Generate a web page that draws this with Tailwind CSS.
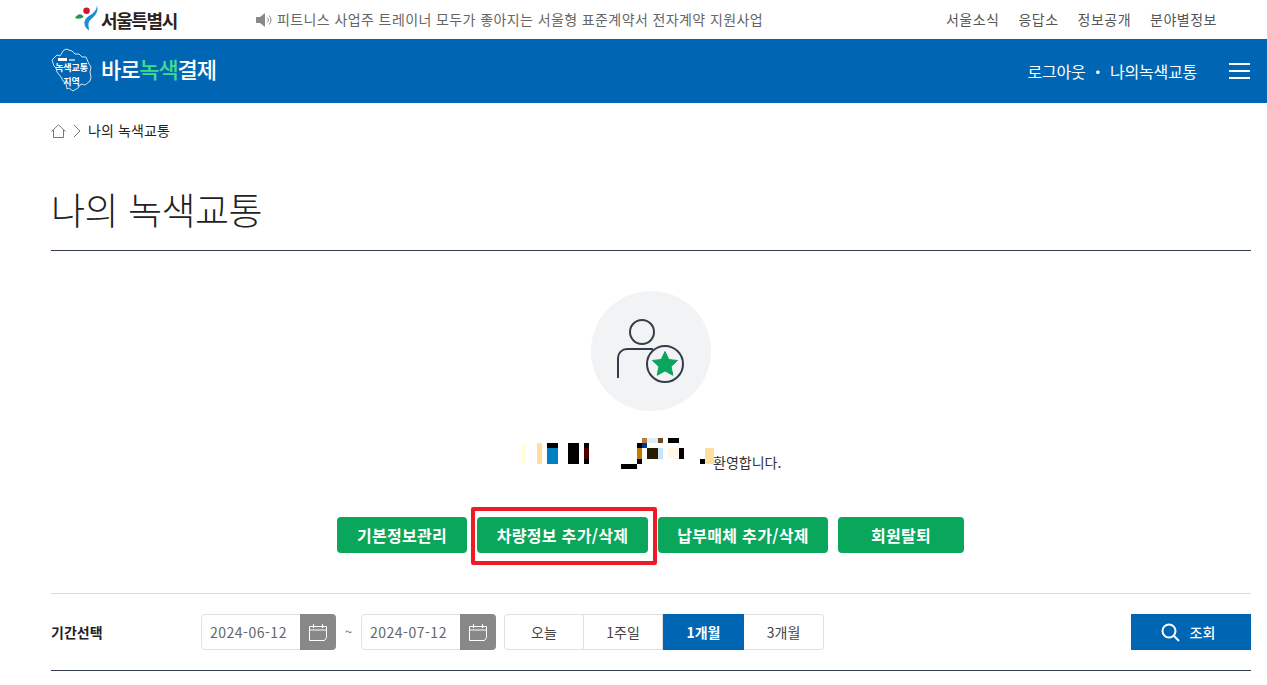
<!DOCTYPE html>
<html lang="ko">
<head>
  <meta charset="UTF-8" />
  <meta name="viewport" content="width=device-width, initial-scale=1" />
  <title>나의 녹색교통</title>
  <script src="https://cdn.jsdelivr.net/npm/@tailwindcss/browser@4"></script>
</head>
<body class="bg-white h-[685px] overflow-hidden font-['Noto_Sans_CJK_KR','Noto_Sans',sans-serif]">
  <!-- top bar -->
  <div class="h-[39px] flex items-center text-[#666] text-[14px]">
    <div class="w-[256px] pl-[75px] flex items-center shrink-0">
      <svg width="25" height="26" viewBox="0 0 26 26" class="mb-[3px]">
        <path d="M0 13 C3 8 7 8 9 12 C6 14 3 14 0 13Z" fill="#1f9a4a" />
        <circle cx="12" cy="5.5" r="3.4" fill="#d8152f" />
        <path d="M23 0 C25 8 19 12 16 15 C13 18 14 22 15 26 C9 23 8 16 13 12 C17 9 22 7 23 0Z" fill="#1b8fd0" />
      </svg>
      <span class="ml-[1px] text-[18px] font-bold text-[#2b2222] tracking-[-1.4px] leading-none">서울특별시</span>
    </div>
    <svg width="17" height="14" viewBox="0 0 17 14" class="shrink-0">
      <path d="M0 4h4l5-4v14l-5-4H0Z" fill="#888" />
      <path d="M11 4.5a3 3 0 0 1 0 5M13 2.5a6 6 0 0 1 0 9" fill="none" stroke="#888" />
    </svg>
    <span class="ml-[4px] tracking-[0.4px]">피트니스 사업주 트레이너 모두가 좋아지는 서울형 표준계약서 전자계약 지원사업</span>
    <nav class="ml-auto mr-[50px] flex gap-[19px] text-[#555] tracking-[0.5px]">
      <a>서울소식</a><a>응답소</a><a>정보공개</a><a>분야별정보</a>
    </nav>
  </div>

  <!-- blue header -->
  <header class="h-[64px] bg-[#0066b3] flex items-center pl-[51px] pr-[17px] text-white">
    <div class="relative w-[41px] h-[44px] shrink-0 -mt-[2px]">
      <svg width="41" height="44" viewBox="0 0 41 44" class="absolute inset-0">
        <path d="M1 12 L6 7 L9 8 L12 3 L15 1 L21 3 L24 6 L28 6 L31 9 L35 9 L38 16 L40 19 L39 24 L40 29 L39 33 L34 37 L30 36 L27 40 L22 43 L18 40 L16 41 L15 35 L12 33 L10 29 L6 24 L5 20 L3 18Z" fill="none" stroke="#cfe3f3" stroke-width="1" stroke-linejoin="round" />
      </svg>
      <div class="absolute inset-0 flex flex-col items-center justify-center text-[9px] font-bold leading-[14px] tracking-[-0.1px] pt-[9px]">
        <span>녹색교통</span><span>지역</span>
      </div>
      <span class="absolute left-[7px] top-[10px] h-[3px] w-[9px] bg-white"></span>
      <span class="absolute left-[18px] top-[11px] h-[2px] w-[6px] bg-white/60"></span>
    </div>
    <div class="ml-[9px] -mt-[5px] text-[22px] font-medium tracking-[-1.1px]">바로<span class="text-[#3fdc8a]">녹색</span>결제</div>
    <div class="ml-auto text-[16px] tracking-[-0.2px]">로그아웃 ・ 나의녹색교통</div>
    <div class="ml-[32px] w-[21px] flex flex-col gap-[5px]">
      <span class="h-[2px] bg-white"></span><span class="h-[2px] bg-white"></span><span class="h-[2px] bg-white"></span>
    </div>
  </header>

  <main class="pl-[51px] pr-[16px]">
    <!-- breadcrumb -->
    <div class="h-[56px] flex items-center text-[14px] text-[#222]">
      <svg width="15" height="14" viewBox="0 0 15 14" fill="none" stroke="#777">
        <path d="M0.5 7.5 7.5 0.8l7 6.7M2.5 6v7.5h10V6" />
      </svg>
      <svg width="8" height="14" viewBox="0 0 8 14" fill="none" stroke="#777" class="ml-[7px]"><path d="M1 1l6 6-6 6" /></svg>
      <span class="ml-[7px] mb-[2px] tracking-[0.1px]">나의 녹색교통</span>
    </div>

    <h1 class="h-[92px] pt-[22px] border-b border-[#333d4b] text-[37px] font-light text-[#222] leading-[56px] tracking-[-0.5px]">나의 녹색교통</h1>

    <!-- profile -->
    <div class="mt-[40px] flex justify-center">
      <div class="w-[120px] h-[120px] rounded-full bg-[#f2f3f5] flex items-center justify-center">
        <svg width="72" height="66" viewBox="0 0 72 66" fill="none" stroke="#333d4b" stroke-width="2">
          <circle cx="27" cy="14" r="12" />
          <path d="M3 60V40a9 9 0 0 1 9-9h26" />
          <circle cx="50" cy="46" r="18" fill="#f2f3f5" />
          <path d="M50 33.500l3.800 8 8.700 1-6.400 6 1.700 8.700-7.800-4.300-7.800 4.300 1.700-8.700-6.400-6 8.700-1Z" fill="#0aa65c" stroke="#0aa65c" stroke-width="1" stroke-linejoin="round" />
        </svg>
      </div>
    </div>

    <!-- welcome, name is mosaicked -->
    <div class="relative h-[59px]">
      <svg width="250" height="35" viewBox="470 438 250 35" class="absolute left-[419px] top-[27px]">
        <rect x="521" y="443" width="5" height="21" fill="#ffffd8" />
        <rect x="537" y="443" width="5" height="21" fill="#ffdf9e" />
        <rect x="547" y="443" width="11" height="5" fill="#000" />
        <rect x="547" y="448" width="11" height="16" fill="#0080c4" />
        <rect x="568" y="443" width="11" height="21" fill="#000" />
        <rect x="584" y="443" width="5" height="21" fill="#000" />
        <rect x="584" y="448" width="5" height="11" fill="#4b0000" />
        <rect x="621" y="464" width="16" height="5" fill="#000" />
        <rect x="637" y="459" width="5" height="5" fill="#000" />
        <rect x="637" y="448" width="5" height="11" fill="#c47a00" />
        <rect x="637" y="443" width="5" height="5" fill="#000" />
        <rect x="642" y="443" width="5" height="5" fill="#003a8c" />
        <rect x="642" y="438" width="5" height="5" fill="#b87a3e" />
        <rect x="647" y="438" width="11" height="5" fill="#deedf8" />
        <rect x="658" y="438" width="5" height="5" fill="#6e4a1e" />
        <rect x="647" y="448" width="11" height="11" fill="#2a1a00" />
        <rect x="658" y="448" width="5" height="11" fill="#c8e4f8" />
        <rect x="668" y="448" width="11" height="11" fill="#fff6e8" />
        <rect x="679" y="448" width="5" height="11" fill="#000" />
        <rect x="668" y="438" width="11" height="5" fill="#000" />
        <rect x="700" y="459" width="5" height="5" fill="#000" />
        <rect x="705" y="448" width="9" height="16" fill="#ffdf9e" />
      </svg>
      <span class="absolute left-[662px] top-[39px] text-[14px] leading-[24px] text-[#333]">환영합니다.</span>
    </div>

    <!-- action buttons -->
    <div class="mt-[47px] flex justify-center gap-[10px] pr-[1px] text-white text-[16px] font-bold tracking-[0.3px]">
      <button class="h-[36px] w-[130px] rounded-[4px] bg-[#0aa65c]">기본정보관리</button>
      <div class="relative">
        <button class="h-[36px] w-[171px] rounded-[4px] bg-[#0aa65c]">차량정보 추가/삭제</button>
        <div class="absolute -left-[6px] -right-[9px] -top-[10px] -bottom-[12px] border-[4px] border-[#ed1c24] rounded-[2px]"></div>
      </div>
      <button class="h-[36px] w-[170px] rounded-[4px] bg-[#0aa65c]">납부매체 추가/삭제</button>
      <button class="h-[36px] w-[126px] rounded-[4px] bg-[#0aa65c]">회원탈퇴</button>
    </div>

    <!-- period filter -->
    <div class="mt-[40px] h-[77px] border-t border-[#dcdcdc] flex items-center">
      <span class="w-[150px] text-[14px] font-bold text-[#222]">기간선택</span>
      <div class="w-[135px] h-[36px] flex rounded-[4px] border border-[#e0e0e0] text-[14px] text-[#666] tracking-[0.5px]">
        <span class="flex-1 pl-[8px] leading-[34px]">2024-06-12</span>
        <span class="w-[36px] -my-px -mr-px bg-[#888] rounded-r-[4px] flex items-center justify-center">
          <svg width="18" height="18" viewBox="0 0 18 18" fill="none" stroke="#fff"><path d="M0.500 3.500h17v11l-2 3h-15ZM0.500 7h17M4.500 1v4M13.500 1v4" /></svg>
        </span>
      </div>
      <span class="w-[25px] text-center text-[13px] text-[#666]">~</span>
      <div class="w-[135px] h-[36px] flex rounded-[4px] border border-[#e0e0e0] text-[14px] text-[#666] tracking-[0.5px]">
        <span class="flex-1 pl-[8px] leading-[34px]">2024-07-12</span>
        <span class="w-[36px] -my-px -mr-px bg-[#888] rounded-r-[4px] flex items-center justify-center">
          <svg width="18" height="18" viewBox="0 0 18 18" fill="none" stroke="#fff"><path d="M0.500 3.500h17v11l-2 3h-15ZM0.500 7h17M4.500 1v4M13.500 1v4" /></svg>
        </span>
      </div>
      <div class="ml-[8px] h-[36px] flex text-[14px] text-[#444] text-center leading-[34px]">
        <span class="w-[80px] border border-[#e0e0e0] rounded-l-[4px]">오늘</span>
        <span class="w-[79px] border border-l-0 border-[#e0e0e0]">1주일</span>
        <span class="w-[81px] bg-[#0066b3] text-white font-bold leading-[36px]">1개월</span>
        <span class="w-[80px] border border-l-0 border-[#e0e0e0] rounded-r-[4px]">3개월</span>
      </div>
      <button class="ml-auto w-[120px] h-[36px] bg-[#0066b3] text-white text-[14px] font-medium flex items-center justify-center gap-[10px] pr-[6px]">
        <svg width="19" height="19" viewBox="0 0 19 19" fill="none" stroke="#fff" stroke-width="2"><circle cx="8" cy="8" r="6.500" /><path d="M13 13l5 5" /></svg>
        조회
      </button>
    </div>
    <div class="h-px bg-[#333d4b]"></div>
  </main>
</body>
</html>
